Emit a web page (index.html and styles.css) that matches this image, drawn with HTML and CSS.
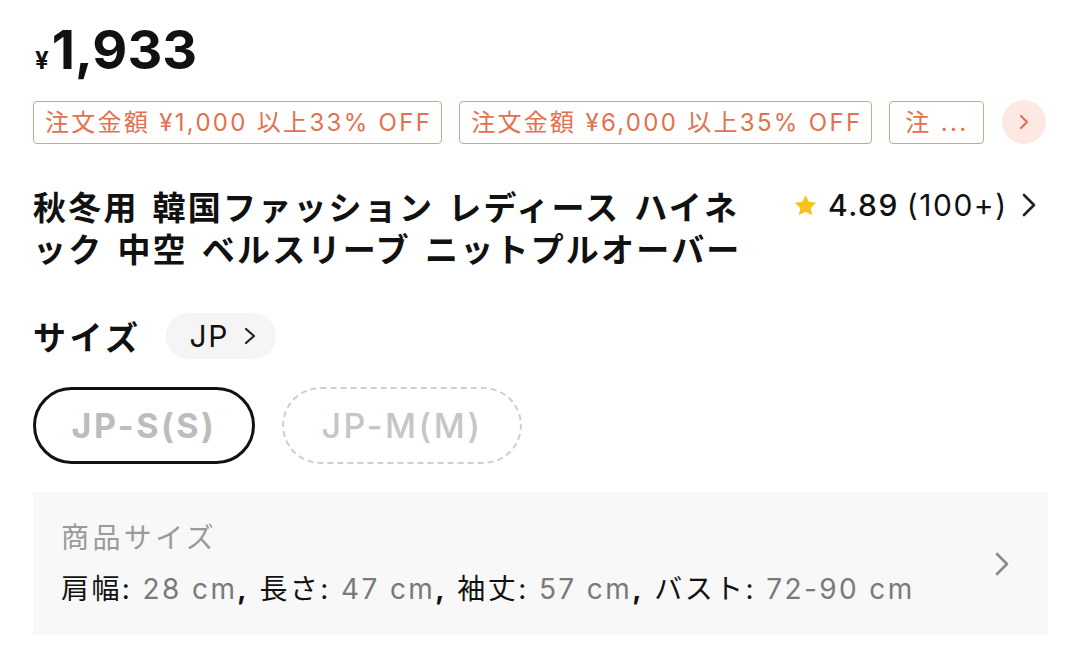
FILE: index.html
```html
<!DOCTYPE html>
<html lang="ja">
<head>
<meta charset="utf-8">
<link rel="stylesheet" href="styles.css">
</head>
<body>
<div class="page">
  <div class="price"><span class="yen">¥</span><span class="amount">1,933</span></div>

  <div class="coupons">
    <div class="coupon">注文金額 ¥1,000 以上33% OFF</div>
    <div class="coupon">注文金額 ¥6,000 以上35% OFF</div>
    <div class="coupon coupon-short">注 ...</div>
    <div class="more">
      <svg width="14" height="18" viewBox="0 0 14 18"><polyline points="4,3 10,9 4,15" fill="none" stroke="#e2705a" stroke-width="2.2" stroke-linecap="round" stroke-linejoin="round"/></svg>
    </div>
  </div>

  <div class="title-row">
    <h1 class="title">秋冬用 韓国ファッション レディース ハイネック 中空 ベルスリーブ ニットプルオーバー</h1>
    <div class="rating">
      <svg class="star" width="25" height="25" viewBox="0 0 24 24"><path d="M12 1.8l3.1 6.6 7.2.9-5.3 5 1.4 7.1L12 17.9l-6.4 3.5 1.4-7.1-5.3-5 7.2-.9z" fill="#f7c21b"/></svg>
      <span class="score">4.89</span>
      <span class="count">(100+)</span>
      <svg class="chev" width="16" height="26" viewBox="0 0 16 26"><polyline points="3,3 13,13 3,23" fill="none" stroke="#222" stroke-width="2.6" stroke-linecap="round" stroke-linejoin="round"/></svg>
    </div>
  </div>

  <div class="size-row">
    <span class="size-label">サイズ</span>
    <span class="region">JP
      <svg width="12" height="20" viewBox="0 0 12 20"><polyline points="2,3 10,10 2,17" fill="none" stroke="#222" stroke-width="2.2" stroke-linecap="round" stroke-linejoin="round"/></svg>
    </span>
  </div>

  <div class="options">
    <div class="opt opt-selected">JP-S(S)</div>
    <div class="opt opt-out">JP-M(M)</div>
  </div>

  <div class="size-info">
    <div class="info-text">
      <div class="info-title">商品サイズ</div>
      <div class="info-line"><span class="k">肩幅:</span> <span class="v">28 cm</span><span class="sep">,</span> <span class="k">長さ:</span> <span class="v">47 cm</span><span class="sep">,</span> <span class="k">袖丈:</span> <span class="v">57 cm</span><span class="sep">,</span> <span class="k">バスト:</span> <span class="v">72-90 cm</span></div>
    </div>
    <svg class="info-chev" width="16" height="26" viewBox="0 0 16 26"><polyline points="3,3 13,13 3,23" fill="none" stroke="#8a8a8a" stroke-width="2.6" stroke-linecap="round" stroke-linejoin="round"/></svg>
  </div>
</div>
</body>
</html>
```

FILE: styles.css
```css
html, body {
  margin: 0;
  padding: 0;
  background: #fff;
}
body {
  font-family: "Inter", "Noto Sans CJK JP", sans-serif;
  color: #111;
}
.page {
  padding: 18px 32px 0 33px;
}
.price {
  display: flex;
  align-items: baseline;
  height: 65px;
}
.yen {
  font-size: 24px;
  font-weight: 700;
  margin-left: 2px;
  margin-right: 3px;
}
.amount {
  font-size: 54px;
  font-weight: 700;
  line-height: 64px;
}
.coupons {
  display: flex;
  align-items: center;
  gap: 17px;
  margin-top: 17px;
}
.coupon {
  height: 41px;
  border: 1px solid #d9a08c;
  border-radius: 4px;
  color: #e2714f;
  font-size: 24px;
  letter-spacing: 2.3px;
  line-height: 41px;
  padding: 0 9px 0 11px;
  white-space: nowrap;
}
.coupon-short {
  width: 73px;
  padding: 0 10px;
  text-align: center;
}
.more {
  margin-left: 1px;
  width: 44px;
  height: 44px;
  border-radius: 50%;
  background: #fde8e4;
  display: flex;
  align-items: center;
  justify-content: center;
}
.title-row {
  display: flex;
  align-items: flex-start;
  margin-top: 43px;
}
.title {
  width: 725px;
  margin: 0;
  font-size: 33px;
  line-height: 42px;
  font-weight: 700;
  letter-spacing: 2.2px;
  word-spacing: 4px;
}
.rating {
  display: flex;
  align-items: center;
  height: 36px;
  margin-left: 35px;
  font-size: 30px;
  letter-spacing: 1.5px;
}
.star {
  margin-right: 10px;
}
.score {
  font-weight: 500;
  margin-right: 8px;
}
.count {
  font-weight: 400;
}
.chev {
  margin-left: 13px;
}
.size-row {
  display: flex;
  align-items: center;
  margin-top: 41px;
}
.size-label {
  font-size: 33px;
  font-weight: 700;
  letter-spacing: 3.5px;
}
.region {
  display: flex;
  align-items: center;
  gap: 15px;
  height: 46px;
  margin-left: 24px;
  padding: 0 20px 0 24px;
  border-radius: 23px;
  background: #f5f5f5;
  font-size: 30px;
  letter-spacing: 1.5px;
}
.options {
  display: flex;
  gap: 27px;
  margin-top: 27px;
}
.opt {
  box-sizing: border-box;
  height: 77px;
  border-radius: 39px;
  display: flex;
  align-items: center;
  justify-content: center;
  font-size: 34px;
  letter-spacing: 2.5px;
  color: #bdbdbd;
}
.opt-selected {
  width: 222px;
  border: 3px solid #111;
  font-weight: 700;
}
.opt-out {
  width: 240px;
  border: 2px dashed #cfcfcf;
  font-weight: 500;
  color: #c6c6c6;
}
.size-info {
  display: flex;
  align-items: center;
  justify-content: space-between;
  margin-top: 28px;
  height: 143px;
  box-sizing: border-box;
  padding: 0 38px 0 28px;
  background: #f8f8f8;
}
.info-title {
  font-size: 28px;
  letter-spacing: 3.4px;
  color: #9a9a9a;
  line-height: 36px;
}
.info-line {
  font-size: 28px;
  letter-spacing: 2.4px;
  line-height: 36px;
  margin-top: 15px;
  color: #111;
}
.v {
  color: #7a7a7a;
}
.sep {
  font-weight: 700;
}
```
